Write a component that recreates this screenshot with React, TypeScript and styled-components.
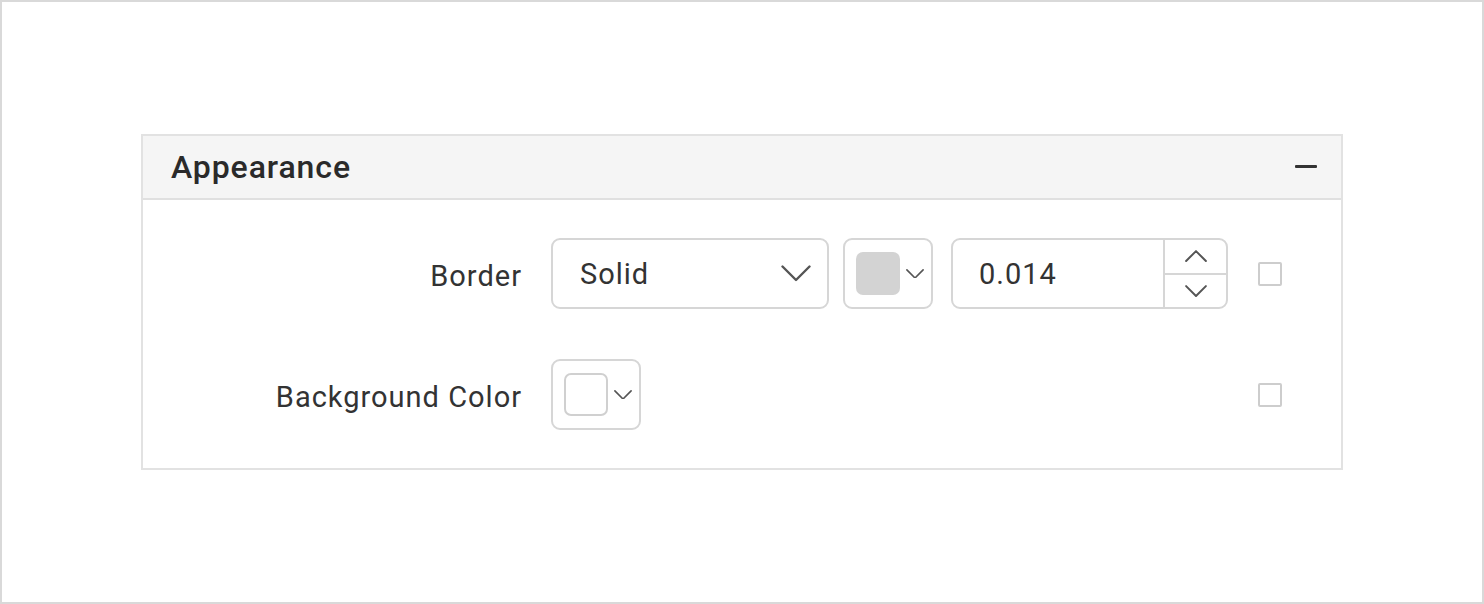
import styled, { createGlobalStyle } from "styled-components";

const GlobalStyle = createGlobalStyle`
html, body {
    margin: 0;
    padding: 0;
    background: #ffffff;
}
* {
    box-sizing: border-box;
}
`;

export default function App() {
    return (
        <>
            <GlobalStyle />
            <Frame>
                <Panel>
                    <Header>
                        <Title>Appearance</Title>
                        <Collapse aria-label="collapse" />
                    </Header>
                    <Body>
                        <Label>Border</Label>
                        <Controls>
                            <Dropdown>
                                <DropdownText>Solid</DropdownText>
                                <Chevron size={30} />
                            </Dropdown>
                            <ColorPicker>
                                <Swatch color="#d3d3d3" />
                                <Chevron size={18} />
                            </ColorPicker>
                            <NumberBox>
                                <NumberText>0.014</NumberText>
                                <Spinner>
                                    <SpinButton>
                                        <Chevron size={22} up />
                                    </SpinButton>
                                    <SpinButton>
                                        <Chevron size={22} />
                                    </SpinButton>
                                </Spinner>
                            </NumberBox>
                        </Controls>
                        <Check />

                        <Label>Background Color</Label>
                        <Controls>
                            <ColorPicker>
                                <Swatch color="#ffffff" outlined />
                                <Chevron size={18} />
                            </ColorPicker>
                        </Controls>
                        <Check />
                    </Body>
                </Panel>
            </Frame>
        </>
    )
}

function Chevron({ size, up }: { size: number; up?: boolean }) {
    const h = size * 0.55;
    return (
        <svg width={size} height={h} viewBox="0 0 20 11" fill="none">
            <path
                d={up ? "M1 10 L10 1 L19 10" : "M1 1 L10 10 L19 1"}
                stroke="#555"
                strokeWidth={size > 24 ? 1.6 : 1.8}
                strokeLinecap="round"
                strokeLinejoin="round"
            />
        </svg>
    );
}

const Frame = styled.div`
width: 1484px;
height: 604px;
border: 2px solid #d9d9d9;
padding: 132px 0 0 139px;
background: #fff;
font-family: Roboto, "Noto Sans", sans-serif;
`;

const Panel = styled.div`
width: 1202px;
border: 2px solid #e2e2e2;
background: #fff;
`;

const Header = styled.div`
height: 64px;
display: flex;
align-items: center;
justify-content: space-between;
padding: 0 24px 0 28px;
background: #f5f5f5;
border-bottom: 2px solid #e0e0e0;
`;

const Title = styled.span`
font-size: 32px;
font-weight: 500;
color: #2a2a2a;
letter-spacing: 0.9px;
`;

const Collapse = styled.span`
width: 22px;
height: 3px;
background: #333;
border-radius: 1px;
margin-top: -2px;
`;

const Body = styled.div`
display: grid;
grid-template-columns: 378px 1fr 24px;
column-gap: 30px;
row-gap: 50px;
align-items: center;
padding: 38px 66px 38px 0;
`;

const Label = styled.span`
justify-self: end;
padding-top: 4px;
font-size: 29px;
letter-spacing: 1px;
margin-right: -1px;
color: #333;
`;

const Controls = styled.div`
display: flex;
align-items: center;
`;

const Box = styled.div`
height: 71px;
border: 2px solid #d6d6d6;
border-radius: 9px;
background: #fff;
display: flex;
align-items: center;
`;

const Dropdown = styled(Box)`
width: 278px;
justify-content: space-between;
padding: 0 16px 0 27px;
margin-right: 14px;
`;

const DropdownText = styled.span`
font-size: 29px;
letter-spacing: 1px;
color: #333;
`;

const ColorPicker = styled(Box)`
width: 90px;
padding: 0 6px 0 11px;
gap: 6px;
margin-right: 18px;
`;

const Swatch = styled.span<{ color: string; outlined?: boolean }>`
width: 44px;
height: 43px;
border-radius: 7px;
background: ${p => p.color};
border: ${p => (p.outlined ? "2px solid #d0d0d0" : "none")};
`;

const NumberBox = styled(Box)`
width: 277px;
overflow: hidden;
`;

const NumberText = styled.span`
flex: 1;
padding-left: 26px;
font-size: 29px;
letter-spacing: 1px;
color: #333;
`;

const Spinner = styled.div`
width: 63px;
height: 100%;
border-left: 2px solid #d6d6d6;
display: flex;
flex-direction: column;
`;

const SpinButton = styled.div`
flex: 1;
display: flex;
align-items: center;
justify-content: center;
& + & {
    border-top: 2px solid #d6d6d6;
}
`;

const Check = styled.span`
width: 24px;
height: 24px;
border: 2px solid #cdcdcd;
border-radius: 2px;
`;
